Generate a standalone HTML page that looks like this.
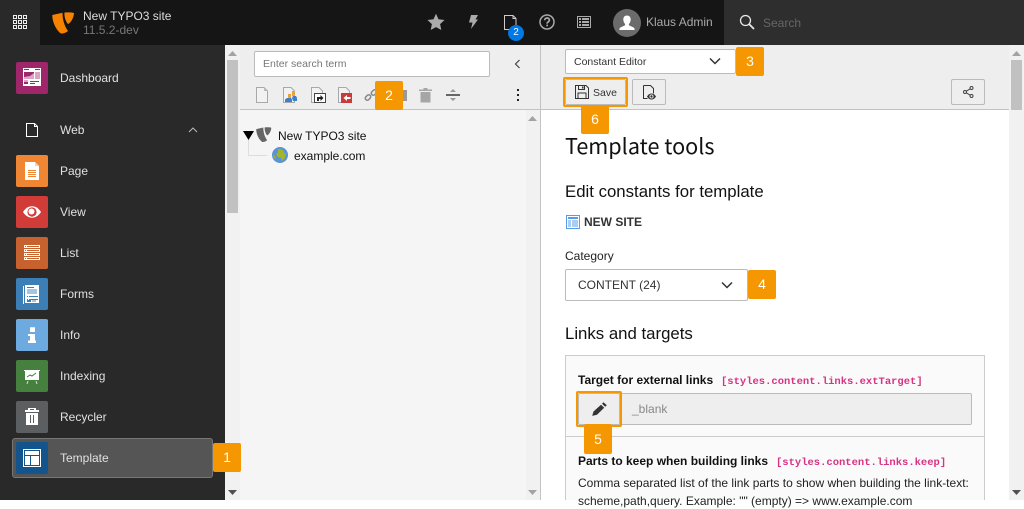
<!DOCTYPE html>
<html><head><meta charset="utf-8"><style>
*{box-sizing:border-box}
html,body{margin:0;padding:0;width:1024px;height:500px;overflow:hidden;background:#fff;font-family:"Liberation Sans",sans-serif;font-size:12px;color:#111}
.a{position:absolute}
.t{position:absolute;white-space:nowrap;line-height:16px}
.ic{position:absolute;left:16px;width:32px;height:32px;border-radius:2px}
.ic svg{position:absolute;left:0;top:0;width:32px;height:32px}
.ml{position:absolute;left:60px;color:#e0e0e0;font-size:12px;line-height:16px;white-space:nowrap}
.b{position:absolute;background:#f59700;color:#fff;width:28px;height:29px;border-radius:2px;text-align:center;font-size:14px;line-height:29px}
svg{display:block;overflow:visible}
.btn{position:absolute;background:#eee;border:1px solid #bbb;border-radius:2px}
code{font-family:"Liberation Mono",monospace;font-size:10.5px;font-weight:bold;color:#d63384}
</style></head><body>
<!-- top bar -->
<div class="a" style="left:0;top:0;width:1024px;height:45px;background:#151515"></div>
<div class="a" style="left:0;top:0;width:40px;height:45px;background:#292929"></div>
<svg class="a" style="left:13px;top:15px" width="14" height="14"><g fill="none" stroke="#eee"><rect x=".5" y=".5" width="3" height="3"/><rect x="5.5" y=".5" width="3" height="3"/><rect x="10.5" y=".5" width="3" height="3"/><rect x=".5" y="5.5" width="3" height="3"/><rect x="5.5" y="5.5" width="3" height="3"/><rect x="10.5" y="5.5" width="3" height="3"/><rect x=".5" y="10.500" width="3" height="3"/><rect x="5.5" y="10.5" width="3" height="3"/><rect x="10.5" y="10.5" width="3" height="3"/></g></svg>
<svg class="a" style="left:52px;top:12px" width="23" height="23" viewBox="0 0 23 23"><path fill="#f78200" d="M.3 3L10.500.7C10.500 8 12.500 14 16 19c-2 2-5 2.700-7 2.500C5 19 .3 11 .3 3zM12.500.5c2.500-.2 7.500-.3 9.500.5 0 4-3 10-6 11-2-2-4-7-3.500-11.500z"/></svg>
<div class="t" style="left:83px;top:8px;color:#ddd">New TYPO3 site</div>
<div class="t" style="left:83px;top:22px;color:#777">11.5.2-dev</div>
<svg class="a" style="left:427px;top:13px" width="18" height="18" viewBox="0 0 18 18"><path fill="#aaa" d="M9 .8l2.500 5.500 6 .7-4.400 4.100 1.200 5.900L9 14.100l-5.300 2.900 1.200-5.900L.5 7l6-.7z"/></svg>
<svg class="a" style="left:469px;top:15px" width="9" height="14" viewBox="0 0 9 14"><path fill="#aaa" d="M2 0h7L6.500 4.500H9L2 14l1.500-6.500H0z"/></svg>
<svg class="a" style="left:504px;top:15px" width="13" height="15" viewBox="0 0 13 15"><path fill="none" stroke="#ccc" d="M.5.500h8.500l3 3v11H.5zM9 .5v3h3"/></svg>
<div class="a" style="left:508px;top:25px;width:16px;height:16px;border-radius:8px;background:#0078e6;color:#fff;font-size:10px;line-height:16px;text-align:center">2</div>
<svg class="a" style="left:539px;top:14px" width="16" height="16" viewBox="0 0 16 16"><circle cx="8" cy="8" r="7" fill="none" stroke="#aaa" stroke-width="1.500"/><path fill="none" stroke="#aaa" stroke-width="1.700" d="M5.700 6.300c0-3 4.700-3 4.700-.2 0 1.700-2.300 1.700-2.300 3.500"/><rect x="7.300" y="10.600" width="1.700" height="1.700" fill="#aaa"/></svg>
<svg class="a" style="left:577px;top:16px" width="14" height="12" viewBox="0 0 14 12"><rect x=".5" y=".5" width="13" height="11" fill="none" stroke="#aaa"/><path fill="#aaa" d="M2 2h2v2H2zM5 2h7v2H5zM2 5h2v2H2zM5 5h7v2H5zM2 8h2v2H2zM5 8h7v2H5z"/></svg>
<div class="a" style="left:613px;top:9px;width:28px;height:28px;border-radius:14px;background:#6b6b6b;overflow:hidden"><svg width="28" height="28" viewBox="0 0 28 28"><path fill="#fff" d="M14 6.500c2.400 0 3.700 1.800 3.700 4 0 2-1 3.700-1.800 4.500v1.300l4.700 2.200c.8.400 1 1.100 1 2.500H6.400c0-1.400.2-2.100 1-2.500l4.700-2.200V15c-.8-.8-1.800-2.500-1.800-4.500 0-2.200 1.300-4 3.700-4z"/></svg></div>
<div class="t" style="left:646px;top:14px;color:#aaa">Klaus Admin</div>
<div class="a" style="left:724px;top:0;width:300px;height:45px;background:#2e2e2e"></div>
<svg class="a" style="left:739px;top:14px" width="16" height="16" viewBox="0 0 16 16"><circle cx="6.500" cy="6.500" r="5" fill="none" stroke="#e8e8e8" stroke-width="1.300"/><path stroke="#e8e8e8" stroke-width="1.800" d="M10 10l5 5"/></svg>
<div class="t" style="left:763px;top:15px;color:#666">Search</div>

<!-- sidebar -->
<div class="a" style="left:0;top:45px;width:225px;height:455px;background:#292929"></div>
<div class="a" style="left:12px;top:438px;width:201px;height:40px;background:#555;border:1px solid #777;border-radius:3px"></div>

<div class="ic" style="top:62px;background:#a0266c"><svg viewBox="0 0 32 32"><rect x="7" y="6" width="18" height="18" fill="#fff"/><path fill="#dba3c5" d="M8 11h10v6H8zM19 10h5v7h-5zM8 18h4v2H8z"/><path fill="#a0266c" d="M8 7h5v1H8zM19 7h5v1h-5zM8 10h10v1l-4 3-6 1zM8 20h4v2H8zM14 19h9v1h-9zM14 21h5v1h-5z"/></svg></div>
<div class="ml" style="top:70px">Dashboard</div>

<svg class="a" style="left:26px;top:123px" width="12" height="14" viewBox="0 0 12 14"><path fill="none" stroke="#fff" d="M.5.500h8l3 3v10H.5zM8.500.5v3h3"/></svg>
<div class="ml" style="top:122px">Web</div>
<svg class="a" style="left:188px;top:126px" width="10" height="8"><path fill="none" stroke="#bbb" d="M1 6l4-4 4 4"/></svg>

<div class="ic" style="top:155px;background:#ef8634"><svg viewBox="0 0 32 32"><path fill="#fff" d="M9 7h10l4 4v14H9z"/><path fill="#fad0ad" d="M19 7l4 4h-4z"/><path fill="#ef8634" d="M12 15h8v1h-8zM12 17h8v1h-8zM12 19h8v1h-8zM12 21h8v1h-8z"/></svg></div>
<div class="ml" style="top:163px">Page</div>

<div class="ic" style="top:196px;background:#d13c38"><svg viewBox="0 0 32 32"><path fill="#fff" d="M7 16c2.500-3.800 5.500-5.700 9-5.700s6.500 1.900 9 5.700c-2.500 3.800-5.500 5.700-9 5.700S9.500 19.800 7 16z"/><circle cx="16" cy="16" r="4.600" fill="#d13c38"/><circle cx="15.500" cy="15.500" r="3" fill="#fff"/></svg></div>
<div class="ml" style="top:204px">View</div>

<div class="ic" style="top:237px;background:#c7622f"><svg viewBox="0 0 32 32"><path fill="#fff" d="M8 8h16v3H8zM8 12h16v3H8zM8 16h16v3H8zM8 20h16v3H8z"/><path fill="#c7622f" d="M11 9h12v1H11zM11 13h12v1H11zM11 17h12v1H11zM11 21h12v1H11zM9 9h1v1H9zM9 13h1v1H9zM9 17h1v1H9zM9 21h1v1H9z"/></svg></div>
<div class="ml" style="top:245px">List</div>

<div class="ic" style="top:278px;background:#3b7fb6"><svg viewBox="0 0 32 32"><path fill="#fff" d="M7 8h1v18H7zM9 7h14v18H9z"/><path fill="#3b7fb6" d="M11 9h7v1h-7zM11 18h1v1h-1zM13 18h9v1h-9zM11 21h1v1h-1zM13 21h9v1h-9zM11 24h4v-2h-4z"/><path fill="#a5c6e0" d="M11 11h10v5H11zM16 22h4v2h-4z"/></svg></div>
<div class="ml" style="top:286px">Forms</div>

<div class="ic" style="top:319px;background:#6daae0"><svg viewBox="0 0 32 32"><path fill="#fff" d="M14 8.300h5V13h-5zM12 15h7v6.500h1V24h-8v-2.500h2V17h-2z"/></svg></div>
<div class="ml" style="top:327px">Info</div>

<div class="ic" style="top:360px;background:#45803f"><svg viewBox="0 0 32 32"><path fill="#fff" d="M8 10h16v1h-1v9H9v-9H8z"/><path fill="none" stroke="#45803f" d="M11 17l3-2 2 1 4-3"/><path stroke="#d0e2ce" d="M12 21l-1 3M20 21l1 3"/></svg></div>
<div class="ml" style="top:368px">Indexing</div>

<div class="ic" style="top:401px;background:#5b5f62"><svg viewBox="0 0 32 32"><path fill="#fff" d="M12 7h8v2h3v2H9V9h3zM10 12h12v12H10z"/><path fill="#5b5f62" d="M14 8h4v1h-4zM14 14h1v8h-1zM17 14h1v8h-1z"/></svg></div>
<div class="ml" style="top:409px">Recycler</div>

<div class="ic" style="top:442px;background:#14548c"><svg viewBox="0 0 32 32"><path fill="#fff" d="M7 7h18v18H7z"/><path fill="#14548c" d="M8 8h16v16H8z"/><path fill="#fff" d="M9 9h14v4H9zM9 14h5v9H9zM15 14h8v9h-8z"/></svg></div>
<div class="ml" style="top:450px">Template</div>

<!-- left scrollbar -->
<div class="a" style="left:225px;top:45px;width:15px;height:455px;background:#f1f1f1"></div>
<div class="a" style="left:227px;top:60px;width:11px;height:153px;background:#c1c1c1"></div>
<svg class="a" style="left:228px;top:51px" width="9" height="5"><path fill="#a3a3a3" d="M4.500 0L9 5H0z"/></svg>
<svg class="a" style="left:228px;top:490px" width="9" height="5"><path fill="#505050" d="M4.500 5L9 0H0z"/></svg>

<!-- tree panel -->
<div class="a" style="left:240px;top:45px;width:300px;height:455px;background:#f5f5f5"></div>
<div class="a" style="left:240px;top:45px;width:300px;height:64px;background:#eee"></div>
<div class="a" style="left:240px;top:109px;width:301px;height:1px;background:#c3c3c3"></div>
<div class="a" style="left:526px;top:110px;width:14px;height:390px;background:#f1f1f1"></div>
<svg class="a" style="left:528px;top:116px" width="9" height="5"><path fill="#a3a3a3" d="M4.500 0L9 5H0z"/></svg>
<svg class="a" style="left:528px;top:490px" width="9" height="5"><path fill="#a3a3a3" d="M4.500 5L9 0H0z"/></svg>
<div class="a" style="left:540px;top:45px;width:1px;height:455px;background:#c3c3c3"></div>
<div class="a" style="left:254px;top:51px;width:236px;height:26px;background:#fff;border:1px solid #bbb;border-radius:2px"></div>
<div class="t" style="left:263px;top:56px;font-size:10.5px;color:#777">Enter search term</div>
<svg class="a" style="left:514px;top:59px" width="7" height="10"><path fill="none" stroke="#444" stroke-width="1.200" d="M5.500 1L1.500 5l4 4"/></svg>

<svg class="a" style="left:256px;top:87px" width="12" height="16" viewBox="0 0 12 16"><path fill="#f2f2f2" stroke="#a8a8a8" d="M.5.500h7.500l3.500 3.500v11.500H.5z"/><path fill="#bbb" d="M8 .5l3.500 3.500H8z"/></svg>
<svg class="a" style="left:283px;top:87px" width="15" height="16" viewBox="0 0 15 16"><path fill="#f2f2f2" stroke="#a8a8a8" d="M.5.500h7.500l3.500 3.500v11.500H.5z"/><path fill="#e8a33d" d="M5 7h3v5H5zM9 4h3v5H9z"/><path fill="#3f7fc9" d="M2 15v-2.500L4 11h4l1 1.500V15zM9 11l1-2h3l1 2v3h-4z"/></svg>
<svg class="a" style="left:311px;top:87px" width="15" height="16" viewBox="0 0 15 16"><path fill="#f2f2f2" stroke="#a8a8a8" d="M.5.500h7.500l3.500 3.500v11.500H.5z"/><rect x="3.500" y="6.500" width="11" height="9" fill="#fff" stroke="#444"/><path fill="#222" d="M6 10h3.500V8l3 3-3 3v-2H8v2H6z"/></svg>
<svg class="a" style="left:338px;top:87px" width="15" height="16" viewBox="0 0 15 16"><path fill="#f2f2f2" stroke="#a8a8a8" d="M.5.500h7.500l3.500 3.500v11.500H.5z"/><rect x="3" y="6" width="11" height="10" fill="#c83c3c"/><path fill="#fff" d="M12.500 10H9V8l-3.500 3L9 14v-2h3.500z"/></svg>
<svg class="a" style="left:364px;top:88px" width="14" height="14" viewBox="0 0 14 14"><g fill="none" stroke="#888" stroke-width="1.500"><rect x="1" y="7.500" width="6" height="4" rx="2" transform="rotate(-45 4 9.500)"/><rect x="7" y="2.500" width="6" height="4" rx="2" transform="rotate(-45 10 4.500)"/></g></svg>
<div class="a" style="left:403px;top:90px;width:4px;height:11px;background:#999"></div>
<svg class="a" style="left:419px;top:88px" width="13" height="15" viewBox="0 0 13 15"><path fill="#a6a6a6" d="M4.500 0h4v1.500H13V3H0V1.500h4.500zM1.500 4h10v10.500h-10z"/></svg>
<svg class="a" style="left:446px;top:88px" width="14" height="14" viewBox="0 0 14 14"><rect y="6" width="14" height="2" fill="#666"/><path fill="#999" d="M7 1l3 3H4zM7 13l3-3H4z"/></svg>
<div class="a" style="left:517px;top:89px;width:2px;height:2px;background:#222;box-shadow:0 5px 0 #222,0 10px 0 #222"></div>

<div class="a" style="left:248px;top:140px;width:1px;height:15px;background:#ddd"></div>
<div class="a" style="left:248px;top:155px;width:19px;height:1px;background:#ddd"></div>
<svg class="a" style="left:243px;top:131px" width="11" height="9"><path fill="#000" d="M0 0h11L5.500 9z"/></svg>
<svg class="a" style="left:256px;top:127px" width="16" height="16" viewBox="0 0 23 23"><path fill="#666" d="M.3 3L10.500.7C10.500 8 12.500 14 16 19c-2 2-5 2.700-7 2.500C5 19 .3 11 .3 3zM12.500.5c2.500-.2 7.500-.3 9.500.5 0 4-3 10-6 11-2-2-4-7-3.500-11.500z"/></svg>
<div class="t" style="left:278px;top:128px">New TYPO3 site</div>
<svg class="a" style="left:272px;top:147px" width="16" height="16" viewBox="0 0 16 16"><circle cx="8" cy="8" r="8" fill="#5b93d9"/><path fill="#a3b52a" d="M6 2l5 1 1 3 2 1-1 4-3 3-1-3-3-1-2-3 2-1zM1 8l2 1 1 3-2-1z"/></svg>
<div class="t" style="left:294px;top:148px">example.com</div>

<!-- main docheader -->
<div class="a" style="left:541px;top:45px;width:468px;height:64px;background:#eee"></div>
<div class="a" style="left:541px;top:109px;width:468px;height:1px;background:#c3c3c3"></div>
<div class="a" style="left:565px;top:49px;width:171px;height:25px;background:#fff;border:1px solid #bbb;border-radius:2px"></div>
<div class="t" style="left:574px;top:54px;font-size:10.5px;color:#333">Constant Editor</div>
<svg class="a" style="left:709px;top:57px" width="12" height="8"><path fill="none" stroke="#333" stroke-width="1.500" d="M1 1.500l5 5 5-5"/></svg>
<div class="btn" style="left:565px;top:79px;width:61px;height:26px"></div>
<div class="a" style="left:563px;top:77px;width:65px;height:30px;border:2px solid #f59700;border-radius:2px"></div>
<svg class="a" style="left:575px;top:85px" width="14" height="14" viewBox="0 0 14 14"><path fill="none" stroke="#333" d="M.5.500h10.500l2.500 2.500v10.500H.5zM3.500.5v4h6v-4M3 13.500V8h8v5.500"/><rect x="7" y="1.500" width="1.500" height="2" fill="#333"/></svg>
<div class="t" style="left:593px;top:85px;font-size:10.5px;color:#333">Save</div>
<div class="btn" style="left:632px;top:79px;width:34px;height:26px"></div>
<svg class="a" style="left:643px;top:85px" width="15" height="15" viewBox="0 0 15 15"><path fill="none" stroke="#333" d="M.5.500h7l3 3v5M.5.500v13h4"/><path fill="#333" d="M4 11.500c1.200-2 2.600-3 4.500-3s3.300 1 4.500 3c-1.200 2-2.600 3-4.500 3s-3.300-1-4.500-3z"/><circle cx="8.500" cy="11.500" r="2" fill="#fff"/><circle cx="8.500" cy="11.500" r="1.200" fill="#333"/></svg>
<div class="btn" style="left:951px;top:79px;width:34px;height:26px"></div>
<svg class="a" style="left:963px;top:86px" width="11" height="12" viewBox="0 0 11 12"><g fill="none" stroke="#444"><circle cx="8.500" cy="2" r="1.500"/><circle cx="2" cy="6" r="1.500"/><circle cx="8.500" cy="10" r="1.500"/><path d="M3.300 5.200l3.900-2.400M3.300 6.800l3.900 2.400"/></g></svg>

<!-- right scrollbar -->
<div class="a" style="left:1009px;top:45px;width:15px;height:455px;background:#f1f1f1"></div>
<div class="a" style="left:1011px;top:60px;width:11px;height:50px;background:#c1c1c1"></div>
<svg class="a" style="left:1012px;top:51px" width="9" height="5"><path fill="#a3a3a3" d="M4.500 0L9 5H0z"/></svg>
<svg class="a" style="left:1012px;top:490px" width="9" height="5"><path fill="#505050" d="M4.500 5L9 0H0z"/></svg>

<!-- content -->
<div class="t" style="left:565px;top:132px;font-family:'Noto Sans CJK JP','Liberation Sans',sans-serif;font-size:21.6px;line-height:28px;color:#111">Template tools</div>
<div class="t" style="left:565px;top:182px;font-size:16.8px;line-height:20px;color:#111">Edit constants for template</div>
<svg class="a" style="left:566px;top:215px" width="14" height="14" viewBox="0 0 14 14"><rect x=".5" y=".5" width="13" height="13" fill="#fff" stroke="#5a9be6"/><path fill="#5a9be6" d="M2 2h10v2H2z"/><path fill="#a9cdf3" d="M2 5h3v7H2zM6 5h6v7H6z"/></svg>
<div class="t" style="left:584px;top:214px;font-weight:bold;color:#333">NEW SITE</div>
<div class="t" style="left:565px;top:248px;color:#222">Category</div>
<div class="a" style="left:565px;top:269px;width:183px;height:32px;background:#fff;border:1px solid #bbb;border-radius:2px"></div>
<div class="t" style="left:578px;top:277px;color:#333">CONTENT (24)</div>
<svg class="a" style="left:721px;top:281px" width="12" height="8"><path fill="none" stroke="#333" stroke-width="1.500" d="M1 1.500l5 5 5-5"/></svg>
<div class="t" style="left:565px;top:324px;font-size:16.8px;line-height:20px;color:#111">Links and targets</div>

<div class="a" style="left:565px;top:355px;width:420px;height:145px;background:#fafafa;border:1px solid #ccc;border-bottom:0"></div>
<div class="t" style="left:578px;top:372px;font-weight:bold;color:#111">Target for external links</div>
<div class="t" style="left:721px;top:372px"><code>[styles.content.links.extTarget]</code></div>
<div class="a" style="left:578px;top:393px;width:394px;height:32px;background:#eee;border:1px solid #bbb;border-radius:2px"></div>
<div class="t" style="left:632px;top:401px;color:#888">_blank</div>
<div class="btn" style="left:578px;top:393px;width:42px;height:32px"></div>
<div class="a" style="left:576px;top:391px;width:46px;height:36px;border:2px solid #f59700;border-radius:2px"></div>
<svg class="a" style="left:592px;top:402px" width="15" height="14" viewBox="0 0 15 14"><path fill="#333" d="M11.500.2l3.300 3-1.600 1.600-3.200-3.100zM9 2.700l3.200 3L5 12.800l-4.800 1.100L1.500 9.500z"/></svg>
<div class="a" style="left:566px;top:436px;width:418px;height:1px;background:#ccc"></div>
<div class="t" style="left:578px;top:453px;font-weight:bold;color:#111">Parts to keep when building links</div>
<div class="t" style="left:776px;top:453px"><code>[styles.content.links.keep]</code></div>
<div class="t" style="left:578px;top:475px;color:#222">Comma separated list of the link parts to show when building the link-text:</div>
<div class="t" style="left:578px;top:493px;color:#222">scheme,path,query. Example: "" (empty) =&gt; www.example.com</div>

<!-- badges -->
<div class="b" style="left:213px;top:443px">1</div>
<div class="b" style="left:375px;top:81px">2</div>
<div class="b" style="left:736px;top:47px">3</div>
<div class="b" style="left:748px;top:270px">4</div>
<div class="b" style="left:584px;top:424px;height:30px;line-height:30px">5</div>
<div class="b" style="left:581px;top:105px;height:29px">6</div>
</body></html>
